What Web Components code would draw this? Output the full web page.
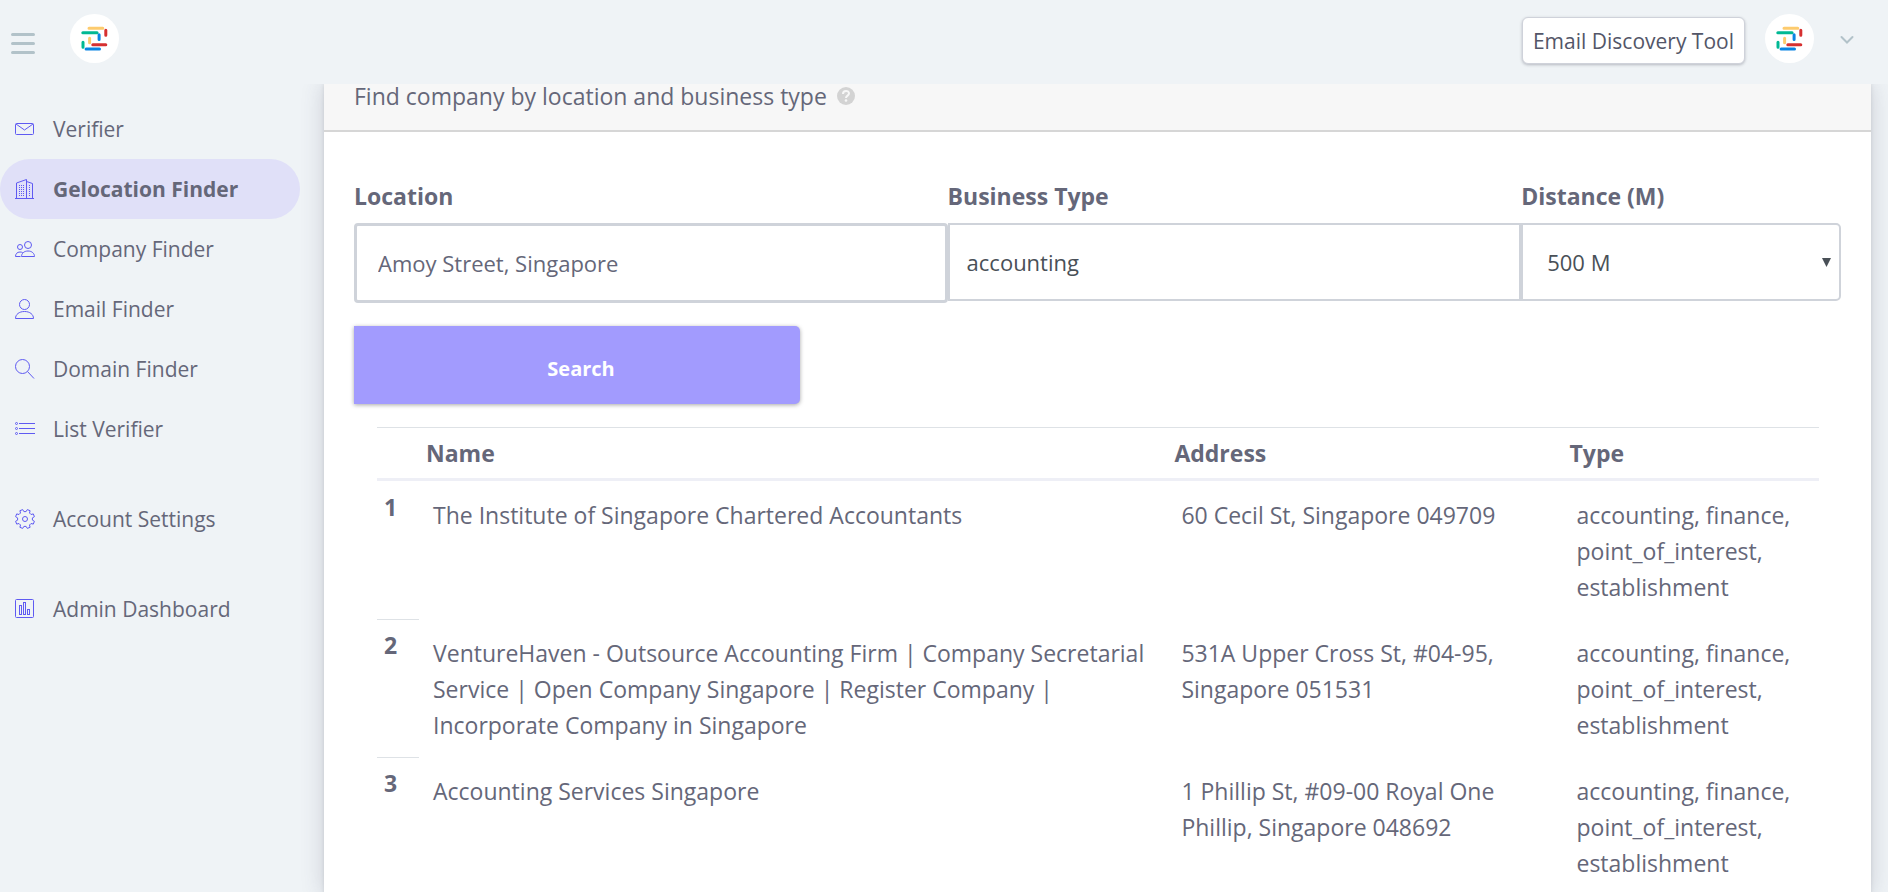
<!DOCTYPE html>
<html lang="en">
<head>
<meta charset="utf-8">
<meta name="viewport" content="width=device-width, initial-scale=1">
<title>Email Discovery Tool</title>
<style>
    body {
        margin: 0;
        background: #eff3f6;
        color: #656779;
        font: 23px/36px "Open Sans", "Noto Sans", sans-serif;
    }
</style>
</head>
<body>
<app-shell>
    <top-bar slot="header">Email Discovery Tool</top-bar>
    <side-nav slot="nav">
        <nav-item icon="mail">Verifier</nav-item>
        <nav-item icon="building" active>Gelocation Finder</nav-item>
        <nav-item icon="users">Company Finder</nav-item>
        <nav-item icon="user">Email Finder</nav-item>
        <nav-item icon="search">Domain Finder</nav-item>
        <nav-item icon="list">List Verifier</nav-item>
        <nav-item icon="gear" spaced>Account Settings</nav-item>
        <nav-item icon="chart" spaced>Admin Dashboard</nav-item>
    </side-nav>
    <finder-card>
        <span slot="title">Find company by location and business type</span>
        <search-form></search-form>
        <result-table></result-table>
    </finder-card>
</app-shell>

<script>
const ICONS = {
    mail: '<rect x="0.5" y="4.5" width="18" height="11" rx="1"/><path d="M1 5l8.5 6L18 5"/>',
    building: '<path d="M0 19.5h19M1.5 19V4l10-3.5V19M11.5 2.5l6 2V19"/><path stroke-dasharray="1 1" d="M4.5 6v11M6.5 6v11M8.5 6v11M14.5 6v11"/>',
    users: '<circle cx="13" cy="6" r="3.5"/><path d="M6.5 17.5c0-3 2.5-5.500 6.500-5.500s6.500 2.500 6.500 5.500z"/><circle cx="5" cy="8" r="2.5"/><path d="M5.5 17.5h-5c0-2.500 1.500-4.500 4.500-4.500 1.200 0 2.200.3 2.800.8"/>',
    user: '<circle cx="9.5" cy="5.5" r="5"/><path d="M.5 19.5c0-4 3.500-7 9-7s9 3 9 7z"/>',
    search: '<circle cx="7.5" cy="7.5" r="7"/><path d="M12.5 12.5l6.500 7"/>',
    list: '<path d="M4 4.5h16M4 9.5h16M4 14.5h16"/><circle cx="1.5" cy="4.5" r="1"/><circle cx="1.5" cy="9.5" r="1"/><circle cx="1.5" cy="14.5" r="1"/>',
    gear: '<circle cx="10" cy="10" r="2.5"/><path stroke-linejoin="round" d="M17.4 11.1L19.4 12.3 18.3 15.1 16 14.5 14.5 16 15.1 18.3 12.3 19.4 11.1 17.4 8.9 17.4 7.7 19.4 4.9 18.3 5.5 16 4 14.5 1.7 15.1.6 12.3 2.6 11.1 2.6 8.9.6 7.7 1.7 4.9 4 5.5 5.5 4 4.9 1.7 7.7.6 8.9 2.6 11.1 2.6 12.3.6 15.1 1.7 14.5 4 16 5.5 18.3 4.9 19.4 7.7 17.4 8.9z"/>',
    chart: '<rect x="0.5" y="0.5" width="18" height="18" rx="1"/><rect x="4.5" y="6.5" width="2" height="9"/><rect x="8.5" y="3.5" width="2" height="12"/><rect x="12.5" y="10.5" width="2" height="5"/>'
};

const LOGO = `
    <svg viewBox="0 0 49 49" width="49" height="49" aria-hidden="true">
        <circle cx="24.5" cy="24.5" r="24.5" fill="#fff"/>
        <g stroke-width="3" stroke-linecap="round">
            <path stroke="#fdcb6e" d="M19 14.2h13.800M19.600 24.200v4.600"/>
            <path stroke="#00b894" d="M12.800 18.700h14.300M13 28.200v5"/>
            <path stroke="#d63031" d="M35.800 16.200v5M22.800 30.700h13"/>
            <path stroke="#0984e3" d="M29.100 20.800v4.700M16.100 34.900h13.400"/>
        </g>
    </svg>`;

class AppShell extends HTMLElement {
    constructor() {
        super();
        this.attachShadow({ mode: 'open' });
    }

    connectedCallback() {
        this.shadowRoot.innerHTML = `
            <style>
                :host {
                    display: flex;
                    flex-direction: column;
                    height: 100vh;
                    overflow: hidden;
                }

                .body {
                    display: flex;
                    flex: 1;
                    min-height: 0;
                }

                main {
                    flex: 1;
                    min-width: 0;
                    padding: 0 17px 0 24px;
                    overflow: auto;
                    scrollbar-width: none;
                }
            </style>
            <slot name="header"></slot>
            <div class="body">
                <slot name="nav"></slot>
                <main><slot></slot></main>
            </div>
        `;
    }
}

class TopBar extends HTMLElement {
    constructor() {
        super();
        this.attachShadow({ mode: 'open' });
    }

    connectedCallback() {
        this.shadowRoot.innerHTML = `
            <style>
                :host {
                    display: flex;
                    align-items: flex-start;
                    justify-content: space-between;
                    box-sizing: border-box;
                    height: 84px;
                    padding: 14px 31px 0 11px;
                }

                .group {
                    display: flex;
                    align-items: flex-start;
                }

                .left { gap: 35px; }
                .right { gap: 20px; }

                button {
                    padding: 0;
                    border: 0;
                    background: none;
                    color: inherit;
                    font: inherit;
                    cursor: pointer;
                }

                svg { display: block; }

                .menu { padding-top: 18px; }
                .chevron { padding: 21px 3px 0 6px; }

                .tool {
                    margin-top: 3px;
                    padding: 2px 10px 0;
                    border: 1px solid #cfd2da;
                    border-radius: 6px;
                    background: #fff;
                    box-shadow: 0 1px 3px rgba(50, 50, 70, 0.3);
                    color: #535668;
                    font-size: 21px;
                    font-weight: 500;
                    line-height: 43px;
                }
            </style>
            <div class="group left">
                <button class="menu" aria-label="Menu">
                    <svg width="24" height="24" fill="none" stroke="#b2c2c9" stroke-width="3" stroke-linecap="round">
                        <path d="M1.5 2.5h21M1.5 11.5h21M1.5 20.5h21"/>
                    </svg>
                </button>
                ${LOGO}
            </div>
            <div class="group right">
                <button class="tool"><slot></slot></button>
                ${LOGO}
                <button class="chevron" aria-label="Account menu">
                    <svg width="14" height="10" fill="none" stroke="#b2c2c9" stroke-width="2" stroke-linecap="round">
                        <path d="M1.5 2L7 7.5 12.5 2"/>
                    </svg>
                </button>
            </div>
        `;
    }
}

class SideNav extends HTMLElement {
    constructor() {
        super();
        this.attachShadow({ mode: 'open' });
    }

    connectedCallback() {
        this.shadowRoot.innerHTML = `
            <style>
                :host {
                    display: block;
                    flex: none;
                    width: 300px;
                    font-size: 21px;
                }

                nav { padding-top: 15px; }
            </style>
            <nav><slot></slot></nav>
        `;
    }
}

class NavItem extends HTMLElement {
    constructor() {
        super();
        this.attachShadow({ mode: 'open' });
    }

    connectedCallback() {
        this.shadowRoot.innerHTML = `
            <style>
                :host { display: block; }
                :host([spaced]) { margin-top: 30px; }

                a {
                    display: flex;
                    align-items: center;
                    gap: 18px;
                    height: 60px;
                    padding-left: 15px;
                    border-radius: 30px;
                    color: inherit;
                    text-decoration: none;
                }

                :host([active]) a {
                    background: #e0e0f8;
                    font-weight: 700;
                }

                svg { flex: none; }
            </style>
            <a href="#">
                <svg width="20" height="20" fill="none" stroke="#5f5af2" aria-hidden="true">${ICONS[this.getAttribute('icon')]}</svg>
                <slot></slot>
            </a>
        `;
    }
}

class FinderCard extends HTMLElement {
    constructor() {
        super();
        this.attachShadow({ mode: 'open' });
    }

    connectedCallback() {
        this.shadowRoot.innerHTML = `
            <style>
                :host {
                    display: block;
                    background: #fff;
                    box-shadow: 0 0 22px rgba(60, 60, 90, 0.2), 0 0 4px rgba(0, 0, 0, 0.1);
                }

                header {
                    display: flex;
                    align-items: center;
                    gap: 10px;
                    padding: 0 30px 22px;
                    border-bottom: 2px solid #d6d6d6;
                    background: #f7f7f7;
                    line-height: 24px;
                }

                .content { padding: 46px 30px 0; }
            </style>
            <header>
                <slot name="title"></slot>
                <svg width="18" height="18" viewBox="0 0 18 18" role="img" aria-label="Help">
                    <circle cx="9" cy="9" r="9" fill="#d3d3d3"/>
                    <path d="M6 7c0-4 6-4 6-.5 0 2.200-3 2-3 4.500" fill="none" stroke="#f7f7f7" stroke-width="2"/>
                    <circle cx="9" cy="13.5" r="1.3" fill="#f7f7f7"/>
                </svg>
            </header>
            <div class="content"><slot></slot></div>
        `;
    }
}

class SearchForm extends HTMLElement {
    constructor() {
        super();
        this.attachShadow({ mode: 'open' });
    }

    connectedCallback() {
        this.shadowRoot.innerHTML = `
            <style>
                :host { display: block; }

                .fields {
                    display: grid;
                    grid-template-columns: 594fr 574fr 320fr;
                    align-items: start;
                }

                .field {
                    display: flex;
                    flex-direction: column;
                    gap: 9px;
                }

                label { font-weight: 700; }

                input, select {
                    box-sizing: border-box;
                    width: 100%;
                    height: 78px;
                    margin: 0;
                    border: 2px solid #cfd3da;
                    border-radius: 0;
                    background: #fff;
                    color: #495057;
                    font: inherit;
                    font-size: 22px;
                }

                #location {
                    height: 80px;
                    padding: 0 21px;
                    border-width: 3px;
                    border-radius: 4px;
                    color: inherit;
                }

                #business { padding: 0 17px; }

                .select {
                    display: grid;
                    align-items: center;
                }

                .select > * { grid-area: 1 / 1; }

                select {
                    padding: 0 24px;
                    border-radius: 0 5px 5px 0;
                    appearance: none;
                }

                .select svg {
                    justify-self: end;
                    margin-right: 10px;
                    pointer-events: none;
                }

                button {
                    width: 30%;
                    height: 78px;
                    margin: 23px 0;
                    padding: 8px 0 0 8px;
                    border: 0;
                    border-radius: 0 5px 5px 0;
                    background: #a29bfe;
                    box-shadow: 0 1px 4px rgba(0, 0, 0, 0.35);
                    color: #fff;
                    font: inherit;
                    font-size: 20px;
                    font-weight: 700;
                    cursor: pointer;
                }
            </style>
            <form>
                <div class="fields">
                    <div class="field">
                        <label for="location">Location</label>
                        <input id="location" type="text" value="Amoy Street, Singapore">
                    </div>
                    <div class="field">
                        <label for="business">Business Type</label>
                        <input id="business" type="text" value="accounting">
                    </div>
                    <div class="field">
                        <label for="distance">Distance (M)</label>
                        <div class="select">
                            <select id="distance">
                                <option>500 M</option>
                            </select>
                            <svg width="9" height="9" aria-hidden="true"><path d="M0 0h9L4.5 9z" fill="#495057"/></svg>
                        </div>
                    </div>
                </div>
                <button type="button">Search</button>
            </form>
        `;
    }
}

class ResultTable extends HTMLElement {
    constructor() {
        super();
        this.attachShadow({ mode: 'open' });
        this.rows = [
            ['The Institute of Singapore Chartered Accountants', '60 Cecil St, Singapore 049709'],
            ['VentureHaven - Outsource Accounting Firm | Company Secretarial Service | Open Company Singapore | Register Company | Incorporate Company in Singapore', '531A Upper Cross St, #04-95, Singapore 051531'],
            ['Accounting Services Singapore', '1 Phillip St, #09-00 Royal One Phillip, Singapore 048692']
        ];
    }

    connectedCallback() {
        const type = 'accounting, finance, point_of_interest, establishment';
        const body = this.rows.map(([name, address], i) => `
            <tr>
                <th scope="row">${i + 1}</th>
                <td>${name}</td>
                <td>${address}</td>
                <td>${type}</td>
            </tr>`).join('');

        this.shadowRoot.innerHTML = `
            <style>
                :host {
                    display: block;
                    padding: 0 22px 0 23px;
                }

                table {
                    width: 100%;
                    table-layout: fixed;
                    border-spacing: 0;
                }

                .num { width: 42px; }
                .name { width: 51.9%; }
                .address { width: 27.4%; }

                th {
                    padding: 7px;
                    border-top: 1px solid #dee2e6;
                    text-align: left;
                    vertical-align: top;
                }

                thead th { border-bottom: 3px solid #eeeff6; }

                tbody tr:first-child th { border-top-color: transparent; }

                td {
                    padding: 16px 14px 14px;
                    vertical-align: top;
                }
            </style>
            <table>
                <colgroup><col class="num"><col class="name"><col class="address"><col></colgroup>
                <thead>
                    <tr><th></th><th scope="col">Name</th><th scope="col">Address</th><th scope="col">Type</th></tr>
                </thead>
                <tbody>${body}</tbody>
            </table>
        `;
    }
}

customElements.define('app-shell', AppShell);
customElements.define('top-bar', TopBar);
customElements.define('side-nav', SideNav);
customElements.define('nav-item', NavItem);
customElements.define('finder-card', FinderCard);
customElements.define('search-form', SearchForm);
customElements.define('result-table', ResultTable);
</script>
</body>
</html>
